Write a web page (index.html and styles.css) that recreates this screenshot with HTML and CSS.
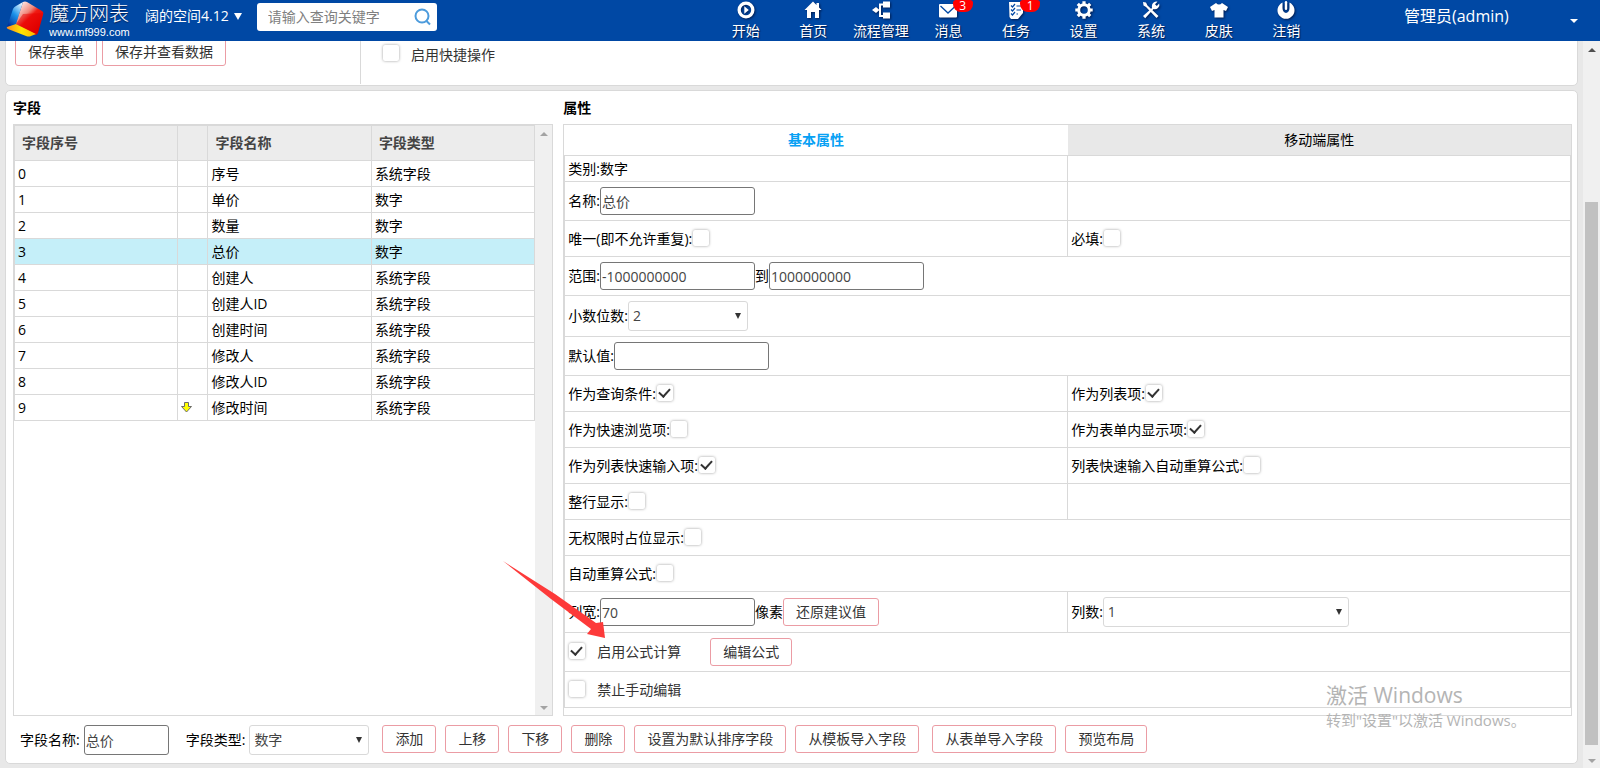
FILE: index.html
```html
<!DOCTYPE html>
<html lang="zh-CN">
<head>
  <meta charset="UTF-8">
  <meta name="viewport" content="width=device-width, initial-scale=1.0">
  <title>魔方网表</title>
  <link rel="stylesheet" href="styles.css">
</head>
<body>
  <header class="topbar">
    <div class="topbar-left">
      <a class="brand" href="#">
        <svg class="brand-cube" width="40" height="38" viewBox="0 0 40 38">
          <defs>
            <linearGradient id="cubeRed" x1="0" y1="0" x2="0.7" y2="0.9">
              <stop offset="0.1" stop-color="#fff1ee" />
              <stop offset="0.45" stop-color="#f0897c" />
              <stop offset="0.6" stop-color="#f01a12" />
              <stop offset="1" stop-color="#d80000" />
            </linearGradient>
            <linearGradient id="cubeBlue" x1="0.8" y1="0" x2="0.2" y2="1">
              <stop offset="0" stop-color="#e8f6ff" />
              <stop offset="0.5" stop-color="#1c93ea" />
              <stop offset="1" stop-color="#00309c" />
            </linearGradient>
            <linearGradient id="cubeYellow" x1="0" y1="0" x2="1" y2="0">
              <stop offset="0" stop-color="#ff8a1e" />
              <stop offset="0.5" stop-color="#ffe600" />
              <stop offset="1" stop-color="#ffb400" />
            </linearGradient>
          </defs>
          <path d="M7 8 Q8 6 10 5 L17 1 L10 23 L1 26 Z" fill="url(#cubeBlue)" />
          <path d="M17 1 Q19 0 21 1 L36 10 Q38 11 37 14 L32 32 Q31 34 29 34 L10 23 Z" fill="url(#cubeRed)" />
          <path d="M1 26 L10 23 L30 33 L25 35 Q23 36 20 35 L2 28 Q0 27 1 26 Z" fill="url(#cubeYellow)" />
          <path d="M17 13 L37 12 L31 33 L10 23 Z" fill="#e80000" opacity="0.5" />
        </svg>
        <span class="brand-text">
          <span class="brand-name">魔方网表</span>
          <span class="brand-url">www.mf999.com</span>
        </span>
      </a>
      <button class="space-btn" type="button">阔的空间4.12<span class="caret"></span></button>
      <form class="search">
        <input type="text" aria-label="查询关键字" placeholder="请输入查询关键字">
        <button type="button" aria-label="查询">
          <svg width="18" height="18" viewBox="0 0 18 18" fill="none" stroke="#4c9bdc" stroke-width="2">
            <circle cx="8" cy="8" r="6.5" />
            <path d="M12.5 13 L16 16.5" />
          </svg>
        </button>
      </form>
    </div>
    <nav class="nav">
      <a href="#">
        <svg viewBox="0 0 18 18"><path fill-rule="evenodd" d="M9 0.500a8.500 8.500 0 1 0 0 17A8.500 8.500 0 0 0 9 0.500zM9 3.800a5.200 5.200 0 1 1 0 10.400A5.200 5.200 0 0 1 9 3.800z" /><path d="M7.300 5.200 L11.800 9 L7.300 12.800z" /></svg>
        开始
      </a>
      <a href="#">
        <svg viewBox="0 0 18 18"><path d="M9 0.500 L0.500 9 H3 V17 H7 V11 H11 V17 H15 V9 H17.500 L15 6.500 V2 H12.500 V4z" /></svg>
        首页
      </a>
      <a href="#">
        <svg viewBox="0 0 18 18"><path d="M4 6 L7.500 9 L4 12 L0 9z M7 2.500 H12 V4.500 H9 V14 H12 V16 H7z M11 0.500 H18 V6.500 H11z M11 11.500 H18 V17.500 H11z" /></svg>
        流程管理
      </a>
      <a href="#">
        <svg viewBox="0 0 18 18"><rect x="0" y="3" width="18" height="13.500" rx="1" /><path d="M1.500 5 L9 12 L16.500 5" fill="none" stroke="#0048a4" stroke-width="1.300" /></svg>
        消息
        <span class="badge">3</span>
      </a>
      <a href="#">
        <svg viewBox="0 0 18 18"><path d="M2 1 H16 V12 L11 18 H4 L2.500 16z" /><path d="M4 4.500 l1.500 1.500 L8 3 M4 8.500 l1.500 1.500 L8 7 M4 12.500 l1.500 1.500 L8 11 M9.500 5 H14 M9.500 9 H14 M9.500 13 H11" fill="none" stroke="#0048a4" stroke-width="1.200" /></svg>
        任务
        <span class="badge">1</span>
      </a>
      <a href="#">
        <svg viewBox="0 0 18 18"><circle cx="9" cy="9" r="5.300" fill="none" stroke="#fff" stroke-width="3" /><path d="M9 0.300 V3 M9 15 V17.700 M0.300 9 H3 M15 9 H17.700 M2.800 2.800 L4.800 4.800 M13.200 13.200 L15.200 15.200 M2.800 15.200 L4.800 13.200 M13.200 4.800 L15.200 2.800" fill="none" stroke="#fff" stroke-width="3.200" /></svg>
        设置
      </a>
      <a href="#">
        <svg viewBox="0 0 18 18"><path d="M1 1 L4 1.500 L5.500 4.500 L16.500 15 L14.500 17 L4 6 L1.500 4.500z" /><path d="M1 15 L10 7 Q9.300 3 12 1.200 Q14 0.200 15.500 0.800 L13 3.200 L14.800 5 L17.200 2.600 Q18 5 16 7 Q14 8.700 11.500 8 L3.200 17.200z" /></svg>
        系统
      </a>
      <a href="#">
        <svg viewBox="0 0 18 18"><path d="M6 2 Q9 5 12 2 L18 6 L16 10 L13.500 9 V16.500 H4.500 V9 L2 10 L0 6z" /></svg>
        皮肤
      </a>
      <a href="#">
        <svg viewBox="0 0 18 18"><path d="M5.500 1.600 A8.500 8.500 0 1 0 12.500 1.600 V7 A3.500 5 0 0 1 5.500 7z" /><rect x="7.800" y="0" width="2.400" height="9" rx="1.200" /></svg>
        注销
      </a>
    </nav>
    <button class="user" type="button">管理员(admin)<span class="caret-small"></span></button>
  </header>

  <div class="page">
    <main class="content">
      <section class="panel panel-actions">
        <div class="save-actions">
          <button class="btn" type="button">保存表单</button>
          <button class="btn" type="button">保存并查看数据</button>
        </div>
        <div class="quick-action">
          <input type="checkbox" id="quick">
          <label for="quick">启用快捷操作</label>
        </div>
      </section>

      <section class="panel panel-fields">
        <div class="columns">
          <div class="column">
            <h2>字段</h2>
            <div class="box field-box">
              <div class="field-list">
                <table class="field-table">
                  <thead>
                    <tr><th>字段序号</th><th class="move"></th><th>字段名称</th><th>字段类型</th></tr>
                  </thead>
                  <tbody>
                    <tr><td>0</td><td></td><td>序号</td><td>系统字段</td></tr>
                    <tr><td>1</td><td></td><td>单价</td><td>数字</td></tr>
                    <tr><td>2</td><td></td><td>数量</td><td>数字</td></tr>
                    <tr class="selected"><td>3</td><td></td><td>总价</td><td>数字</td></tr>
                    <tr><td>4</td><td></td><td>创建人</td><td>系统字段</td></tr>
                    <tr><td>5</td><td></td><td>创建人ID</td><td>系统字段</td></tr>
                    <tr><td>6</td><td></td><td>创建时间</td><td>系统字段</td></tr>
                    <tr><td>7</td><td></td><td>修改人</td><td>系统字段</td></tr>
                    <tr><td>8</td><td></td><td>修改人ID</td><td>系统字段</td></tr>
                    <tr>
                      <td>9</td>
                      <td><svg class="down-mark" width="11" height="11" viewBox="0 0 11 11"><path d="M3.500 0.500 H7.500 V4.500 H10.500 L5.500 10 L0.500 4.500 H3.500z" fill="#ffff00" stroke="#6b6b6b" /></svg></td>
                      <td>修改时间</td><td>系统字段</td>
                    </tr>
                  </tbody>
                </table>
              </div>
              <div class="scrollbar">
                <span class="arrow up disabled"></span>
                <span class="arrow down disabled"></span>
              </div>
            </div>
          </div>

          <div class="column">
            <h2>属性</h2>
            <div class="box">
              <div class="tabs">
                <button class="tab active" type="button">基本属性</button>
                <button class="tab" type="button">移动端属性</button>
              </div>
              <table class="prop-table">
                <tr class="row-text">
                  <td>类别:数字</td>
                  <td></td>
                </tr>
                <tr class="row-input">
                  <td><div class="cell"><label for="name">名称:</label><input class="text" type="text" id="name" value="总价"></div></td>
                  <td></td>
                </tr>
                <tr class="row-check">
                  <td><div class="cell"><label for="unique">唯一(即不允许重复):</label><input type="checkbox" id="unique"></div></td>
                  <td><div class="cell"><label for="required">必填:</label><input type="checkbox" id="required"></div></td>
                </tr>
                <tr class="row-input">
                  <td colspan="2"><div class="cell"><label for="min">范围:</label><input class="text" type="text" id="min" value="-1000000000"><label for="max">到</label><input class="text" type="text" id="max" value="1000000000"></div></td>
                </tr>
                <tr class="row-select">
                  <td colspan="2"><div class="cell"><label for="decimals">小数位数:</label><span class="select"><select id="decimals"><option>2</option></select></span></div></td>
                </tr>
                <tr class="row-input">
                  <td colspan="2"><div class="cell"><label for="default">默认值:</label><input class="text" type="text" id="default"></div></td>
                </tr>
                <tr class="row-check">
                  <td><div class="cell"><label for="query">作为查询条件:</label><input type="checkbox" id="query" checked></div></td>
                  <td><div class="cell"><label for="list">作为列表项:</label><input type="checkbox" id="list" checked></div></td>
                </tr>
                <tr class="row-check">
                  <td><div class="cell"><label for="browse">作为快速浏览项:</label><input type="checkbox" id="browse"></div></td>
                  <td><div class="cell"><label for="inform">作为表单内显示项:</label><input type="checkbox" id="inform" checked></div></td>
                </tr>
                <tr class="row-check">
                  <td><div class="cell"><label for="fast">作为列表快速输入项:</label><input type="checkbox" id="fast" checked></div></td>
                  <td><div class="cell"><label for="recalc-list">列表快速输入自动重算公式:</label><input type="checkbox" id="recalc-list"></div></td>
                </tr>
                <tr class="row-check">
                  <td><div class="cell"><label for="fullrow">整行显示:</label><input type="checkbox" id="fullrow"></div></td>
                  <td></td>
                </tr>
                <tr class="row-check">
                  <td colspan="2"><div class="cell"><label for="holder">无权限时占位显示:</label><input type="checkbox" id="holder"></div></td>
                </tr>
                <tr class="row-check">
                  <td colspan="2"><div class="cell"><label for="recalc">自动重算公式:</label><input type="checkbox" id="recalc"></div></td>
                </tr>
                <tr class="row-select">
                  <td><div class="cell"><label for="width">列宽:</label><input class="text" type="text" id="width" value="70">像素<button class="btn" type="button">还原建议值</button></div></td>
                  <td><div class="cell"><label for="cols">列数:</label><span class="select select-wide"><select id="cols"><option>1</option></select></span></div></td>
                </tr>
                <tr class="row-input">
                  <td colspan="2"><div class="cell formula"><input type="checkbox" id="formula" checked><label for="formula">启用公式计算</label><button class="btn" type="button">编辑公式</button></div></td>
                </tr>
                <tr class="row-check">
                  <td colspan="2"><div class="cell formula"><input type="checkbox" id="readonly"><label for="readonly">禁止手动编辑</label></div></td>
                </tr>
              </table>
            </div>
          </div>
        </div>

        <div class="toolbar">
          <div class="field">
            <label for="field-name">字段名称:</label>
            <input class="text" type="text" id="field-name" value="总价">
          </div>
          <div class="field">
            <label for="field-type">字段类型:</label>
            <span class="select"><select id="field-type"><option>数字</option></select></span>
          </div>
          <div class="toolbar-buttons">
            <button class="btn" type="button">添加</button>
            <button class="btn" type="button">上移</button>
            <button class="btn" type="button">下移</button>
            <button class="btn" type="button">删除</button>
            <button class="btn" type="button">设置为默认排序字段</button>
            <button class="btn" type="button">从模板导入字段</button>
            <button class="btn btn-spaced" type="button">从表单导入字段</button>
            <button class="btn" type="button">预览布局</button>
          </div>
        </div>
      </section>
    </main>

    <div class="scrollbar">
      <span class="arrow up"></span>
      <span class="thumb"></span>
      <span class="arrow down disabled"></span>
    </div>
  </div>

  <svg class="pointer" width="104" height="78" viewBox="0 0 104 78">
    <path d="M0 0 L52 33 L93 62 L100 61 L102 77 L84 73 L88 68 L48 38z" fill="#fd3a3a" />
  </svg>

  <div class="watermark">
    <p class="watermark-title">激活 Windows</p>
    <p>转到"设置"以激活 Windows。</p>
  </div>
</body>
</html>
```

FILE: styles.css
```css
* { box-sizing: border-box; }
body {
  display: flex;
  flex-direction: column;
  height: 100vh;
  margin: 0;
  overflow: hidden;
  background: #e8e8e8;
  color: #000;
  font-family: "Open Sans", "Noto Sans CJK SC", sans-serif;
  font-size: 14px;
  line-height: 20px;
}
button, input, select { font: inherit; color: inherit; }
button { cursor: pointer; }
p { margin: 0; }
h2 { margin: 0; padding: 7px 0 6px; font-size: 14px; line-height: 20px; font-weight: bold; }

/* top bar */
.topbar {
  display: flex;
  flex: none;
  height: 41px;
  background: #0048a4;
  color: #fff;
  position: relative;
  z-index: 1;
}
.topbar-left { flex: 1; display: flex; align-items: flex-start; }
.brand {
  display: flex;
  gap: 3px;
  padding: 1px 0 0 6px;
  color: #fff;
  text-decoration: none;
}
.brand-text { display: flex; flex-direction: column; width: 96px; }
.brand-name { font-size: 20px; line-height: 25px; font-weight: 300; text-shadow: 0 1px 1px #001c50; }
.brand-url { font-family: "Liberation Sans", sans-serif; font-size: 11px; line-height: 12px; }
.space-btn {
  display: flex;
  align-items: center;
  gap: 5px;
  height: 32px;
  padding: 0;
  border: 0;
  background: none;
}
.caret {
  border: 4px solid transparent;
  border-top: 7px solid #fff;
  border-bottom: 0;
}
.search {
  display: flex;
  align-items: center;
  width: 180px;
  height: 28px;
  margin: 3px 0 0 15px;
  background: #fff;
  border-radius: 3px;
}
.search input {
  flex: 1;
  min-width: 0;
  padding: 0 0 0 11px;
  border: 0;
  background: none;
  outline: none;
}
.search input::placeholder { color: #808080; }
.search button { display: flex; padding: 0 5px; border: 0; background: none; }
.nav { display: grid; grid-template-columns: repeat(9, 1fr); width: 608px; }
.nav a {
  position: relative;
  display: flex;
  flex-direction: column;
  align-items: center;
  padding-top: 1px;
  color: #fff;
  text-decoration: none;
  text-shadow: 1px 1px 1px #001c50;
  white-space: nowrap;
}
.nav svg {
  width: 18px;
  height: 18px;
  margin-bottom: 2px;
  fill: #fff;
  filter: drop-shadow(1px 1px 1px #001c50);
}
.badge {
  position: absolute;
  top: 0;
  left: 38px;
  width: 20px;
  height: 12px;
  border-radius: 3px 3px 8px 8px;
  background: #f00;
  font-size: 12px;
  line-height: 12px;
  text-align: center;
  text-shadow: none;
}
.user {
  display: flex;
  justify-content: space-between;
  align-items: center;
  width: 280px;
  height: 32px;
  padding: 0 22px 0 84px;
  border: 0;
  background: none;
  font-size: 16px;
}
.caret-small {
  margin-top: 10px;
  border: 4px solid transparent;
  border-top-color: #fff;
  border-bottom: 0;
}

/* page and scroll bars */
.page { flex: 1; display: flex; min-height: 0; }
.content { flex: 1; min-width: 0; padding: 0 5px; overflow: hidden; }
.scrollbar {
  display: flex;
  flex-direction: column;
  align-items: center;
  width: 17px;
  padding: 7px 0 5px;
  background: #f0f0f0;
}
.arrow { border: 4px solid transparent; }
.arrow.up { border-top: 0; border-bottom-color: #505050; }
.arrow.down { border-bottom: 0; border-top-color: #505050; margin-top: auto; }
.arrow.up.disabled { border-bottom-color: #a3a3a3; }
.arrow.down.disabled { border-top-color: #a3a3a3; }
.thumb { width: 13px; height: 76%; margin-top: 150px; background: #c1c1c1; }

/* panels */
.panel { background: #fff; border: 1px solid #d9d9d9; border-radius: 5px; }
.panel-actions {
  display: flex;
  margin: -8px 0 4px;
  padding-bottom: 1px;
}
.save-actions {
  display: flex;
  gap: 5px;
  align-items: flex-start;
  width: 355px;
  padding: 4px 9px 18px;
  border-right: 1px solid #d9d9d9;
}
.quick-action {
  display: flex;
  gap: 11px;
  align-items: flex-start;
  padding: 11px 21px 0;
  color: #333;
}
.panel-fields { padding: 0 5px 0 7px; }
.columns { display: grid; grid-template-columns: 15fr 28fr; gap: 10px; }
.column { display: flex; flex-direction: column; }
.box { flex: 1; border: 1px solid #d9d9d9; padding-bottom: 7px; }

/* field list */
.field-box { display: flex; padding: 0; }
.field-list { flex: 1; }
.field-table, .prop-table { width: 100%; border-collapse: collapse; table-layout: fixed; }
.field-table th, .field-table td, .prop-table td { border: 1px solid #d9d9d9; }
.field-table th {
  height: 35px;
  padding: 0 7px;
  background: #ececec;
  color: #444;
  text-align: left;
}
.field-table .move { width: 30px; }
.field-table td { height: 26px; padding: 0 3px; }
.field-table .selected { background: #c5eff9; }
.down-mark { display: block; }

/* properties */
.tabs { display: flex; }
.tab {
  flex: 1;
  height: 30px;
  padding: 0;
  border: 0;
  background: #e8e8e8;
}
.tab.active { background: #fff; color: #08a1f4; font-weight: bold; }
.prop-table td { padding: 0 3px; }
.row-text { height: 26px; }
.row-input { height: 39px; }
.row-check { height: 36px; }
.row-select { height: 41px; }
.cell { display: flex; align-items: center; white-space: nowrap; }
.formula { color: #333; }
.formula label { margin-left: 11px; }
.formula .btn { margin-left: 29px; }

/* controls */
.text {
  width: 155px;
  height: 28px;
  padding: 0 1px;
  border: 1px solid #767676;
  border-radius: 3px;
  color: #444;
}
.select { position: relative; width: 120px; }
.select-wide { width: 246px; }
.select select {
  display: block;
  appearance: none;
  width: 100%;
  height: 30px;
  padding: 0 4px;
  border: 1px solid #d9d9d9;
  border-radius: 3px;
  background: #fff;
  color: #444;
}
.select::after {
  content: "";
  position: absolute;
  top: 12px;
  right: 7px;
  border: 3px solid transparent;
  border-top: 6px solid #333;
  border-bottom: 0;
  pointer-events: none;
}
.btn {
  height: 28px;
  padding: 0 12px;
  border: 1px solid #eb9ca4;
  border-radius: 3px;
  background: #fff;
  color: #333;
  white-space: nowrap;
}
input[type="checkbox"] {
  appearance: none;
  flex: none;
  width: 16px;
  height: 16px;
  margin: 0 1px 2px;
  border-radius: 2px;
  background: #fff;
  box-shadow: 0 0 3px rgba(0,0,0,0.4);
}
input[type="checkbox"]:checked::before {
  content: "";
  display: block;
  width: 5px;
  height: 9px;
  margin: 1px 0 0 4px;
  border: solid #333;
  border-width: 0 2px 2px 0;
  transform: rotate(42deg);
}

/* bottom toolbar */
.toolbar { display: flex; gap: 17px; padding: 9px 7px 8px; }
.field { display: flex; align-items: center; gap: 4px; }
.field .text { width: 85px; height: 30px; }
.toolbar-buttons { display: flex; align-items: flex-start; gap: 9px; margin-left: -4px; }
.btn-spaced { margin-left: 4px; }

/* overlays */
.pointer { position: absolute; left: 503px; top: 561px; pointer-events: none; }
.watermark {
  position: absolute;
  right: 76px;
  bottom: 38px;
  width: 198px;
  color: #b4b4b4;
  font-size: 15px;
  white-space: nowrap;
  pointer-events: none;
}
.watermark-title { font-size: 21px; line-height: 30px; }
```
